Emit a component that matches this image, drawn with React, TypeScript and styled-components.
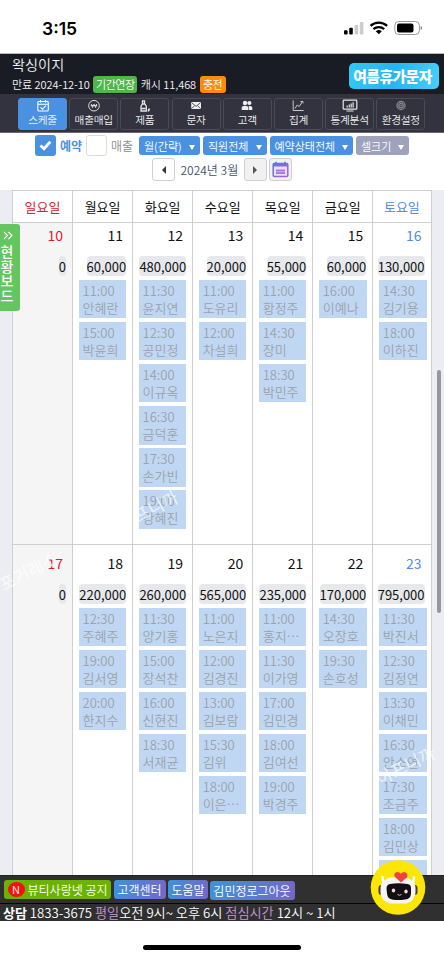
import React from "react";
import styled, { createGlobalStyle, css } from "styled-components";

const Global = createGlobalStyle`
  * { box-sizing: border-box; }
  html, body { margin: 0; padding: 0; background: #fff; }
  body { font-family: "Noto Sans CJK KR", "Noto Sans", sans-serif; font-weight: 350; overflow: hidden; }
`;

const Screen = styled.div`
  position: relative;
  width: 444px;
  height: 960px;
  overflow: hidden;
  display: flex;
  flex-direction: column;
  background: #fff;
  white-space: nowrap;
`;

const StatusBar = styled.div`
  height: 54px;
  flex: none;
  display: flex;
  align-items: center;
  justify-content: space-between;
  padding: 3px 21px 0 42px;
  border-bottom: 1px solid #b9babd;
`;
const Clock = styled.span`
  font: 600 17.5px/20px Inter, sans-serif;
  letter-spacing: 0;
  padding-top: 2px;
`;
const StatusIcons = styled.svg`
  width: 82px;
  height: 18px;
`;

const Header = styled.header`
  height: 40px;
  flex: none;
  background: #191c24;
  color: #f1f2f4;
  display: flex;
  justify-content: space-between;
  padding: 0 5px 0 12px;
`;
const ShopInfo = styled.div`
  display: flex;
  flex-direction: column;
`;
const ShopName = styled.div`
  font-size: 14.2px;
  line-height: 21px;
  height: 21px;
`;
const AccountLine = styled.div`
  display: flex;
  align-items: center;
  font-size: 11px;
  line-height: 18px;
  height: 18px;
  letter-spacing: -0.06px;
`;
const Tag = styled.span<{ $color: string; $w: number; $gap: number }>`
  width: ${(p) => p.$w}px;
  height: 17px;
  margin: 0 ${(p) => p.$gap}px;
  border-radius: 3px;
  background: ${(p) => p.$color};
  color: #fff;
  text-align: center;
  line-height: 17px;
  letter-spacing: -0.5px;
  font-size: 11px;
`;
const Promo = styled.div`
  width: 90px;
  height: 26px;
  margin-top: 9px;
  padding-right: 3px;
  border-radius: 5px;
  background: linear-gradient(100deg, #35c8f6, #27b4f2 50%, #46d0fa);
  color: #fff;
  font-size: 14.8px;
  font-weight: 900;
  letter-spacing: -0.5px;
  line-height: 25px;
  text-align: center;
`;

const Nav = styled.nav`
  height: 39px;
  flex: none;
  background: #32333f;
  border-bottom: 1px solid #6d6672;
  display: flex;
  gap: 2.2px;
  padding: 4px 0 0 18px;
`;
const NavButton = styled.div<{ $active?: boolean }>`
  width: 49px;
  height: 32px;
  border-radius: 3px;
  border: 1px solid ${(p) => (p.$active ? "#4b91e2" : "#484a56")};
  background: ${(p) => (p.$active ? "#4b91e2" : "#32333f")};
  color: #f0f0f2;
  display: flex;
  flex-direction: column;
  align-items: center;
  font-size: 10.7px;
  line-height: 16px;
  letter-spacing: -0.3px;
  svg { width: 16px; height: 13px; margin: 0; flex: none; }
`;

const Filters = styled.div`
  height: 24px;
  flex: none;
  display: flex;
  align-items: center;
  padding: 1px 0 0 35px;
`;
const Check = styled.div<{ $on?: boolean }>`
  width: 21px;
  height: 21px;
  border-radius: 3px;
  background: ${(p) => (p.$on ? "#4b91e2" : "#fff")};
  border: ${(p) => (p.$on ? "none" : "1.5px solid #dfdcd8")};
  display: flex;
  align-items: center;
  justify-content: center;
`;
const CheckLabel = styled.span<{ $on?: boolean }>`
  width: ${(p) => (p.$on ? 26 : 28)}px;
  margin-left: 4px;
  font-size: 12px;
  line-height: 20px;
  font-weight: ${(p) => (p.$on ? 700 : 350)};
  color: ${(p) => (p.$on ? "#4b91e2" : "#8d8d8d")};
`;
const Select = styled.div<{ $w: number; $muted?: boolean }>`
  width: ${(p) => p.$w}px;
  height: 19px;
  margin-right: 3px;
  padding: 0 5px;
  border-radius: 3px;
  background: ${(p) => (p.$muted ? "#9fa2bd" : "#4b91e2")};
  color: #fff;
  display: flex;
  align-items: center;
  justify-content: space-between;
  font-size: 11px;
  line-height: 18px;
  &::after {
    content: "";
    border: 3.5px solid transparent;
    border-top: 5px solid #fff;
    border-bottom: 0;
    margin-top: 3px;
  }
`;
const MonthRow = styled.div`
  height: 33px;
  flex: none;
  display: flex;
  padding: 1px 0 0 152px;
`;
const SquareButton = styled.div<{ $shade?: boolean }>`
  width: 23px;
  height: 23px;
  margin-right: 2.5px;
  border: 1px solid #cfcfcf;
  border-radius: 3px;
  background: ${(p) => (p.$shade ? "#f1f1f1" : "#fff")};
  display: flex;
  align-items: center;
  justify-content: center;
`;
const MonthLabel = styled.span`
  width: 66px;
  padding-left: 3px;
  font-size: 12px;
  line-height: 24px;
  color: #42526a;
`;

const Board = styled.main`
  height: 685px;
  flex: none;
  background: #ecedf3;
  padding: 0 12.5px 0 12px;
  overflow: hidden;
`;
const Week = styled.div<{ $h: number }>`
  height: ${(p) => p.$h}px;
  width: 419.5px;
  display: grid;
  grid-template-columns: repeat(6, 60.05px) 1fr;
  border-top: 1px solid #cfcfcf;
  border-left: 1px solid #cfcfcf;
`;
type Tone = "red" | "blue" | "plain";
const toneColor = { red: "#e0202c", blue: "#4f8de0", plain: "#111" };
const DayName = styled.div<{ $tone: Tone }>`
  background: #fff;
  border-right: 1px solid #cfcfcf;
  color: ${(p) => toneColor[p.$tone]};
  font-size: 13px;
  font-weight: 400;
  line-height: 31px;
  text-align: center;
`;
const DayCell = styled.div<{ $top: number; $sunday: boolean }>`
  background: ${(p) => (p.$sunday ? "#f5f5f6" : "#fff")};
  border-right: 1px solid #cfcfcf;
  padding: ${(p) => p.$top}px 5px 0 6px;
  display: flex;
  flex-direction: column;
  overflow: hidden;
`;
const DayNumber = styled.div<{ $tone: Tone }>`
  height: 20px;
  flex: none;
  margin: 0 4px 10px 0;
  text-align: right;
  font-size: 14px;
  line-height: 18px;
  font-weight: 400;
  color: ${(p) => toneColor[p.$tone]};
`;
const Sales = styled.div`
  align-self: flex-end;
  flex: none;
  height: 20px;
  margin: 0 1px 4px 0;
  border-radius: 4px;
  background: #e6e8ec;
  color: #111;
  font-size: 13px;
  font-weight: 400;
  letter-spacing: -0.02px;
  line-height: 21px;
`;
const Booking = styled.div`
  height: 38.3px;
  width: 47.3px;
  flex: none;
  margin-bottom: 3.8px;
  padding: 2px 0 0 3.5px;
  background: #c0d7f3;
  color: #9ba2aa;
  font-size: 13px;
  line-height: 17px;
`;

const Footer = styled.footer`
  height: 46px;
  flex: none;
  background: #303030;
  color: #fff;
`;
const FooterButtons = styled.div`
  height: 29px;
  display: flex;
  align-items: center;
  gap: 2.5px;
  padding-left: 4px;
  border-bottom: 1px solid #050505;
  border-top: 1px solid #232323;
`;
const Pill = styled.div<{ $w: number; $green?: boolean; $down?: boolean }>`
  width: ${(p) => p.$w}px;
  height: 19px;
  margin-top: ${(p) => (p.$down ? 1 : -1)}px;
  margin-left: ${(p) => (p.$down ? -1 : 0)}px;
  border-radius: 3px;
  display: flex;
  align-items: center;
  justify-content: center;
  gap: 3px;
  font-size: 12px;
  line-height: 19px;
  ${(p) =>
    p.$green
      ? css`background: #6bb300;`
      : css`background: linear-gradient(100deg, #3e92dc, #7468c4);`}
`;
const NewDot = styled.span`
  width: 17px;
  height: 15px;
  border-radius: 50%;
  background: #f50f0f;
  text-align: center;
  font-size: 11px;
  line-height: 15px;
`;
const Hours = styled.div`
  height: 17px;
  padding-left: 3px;
  font-size: 13.2px;
  line-height: 17px;
  letter-spacing: -0.02px;
  b { font-weight: 700; font-size: 13px; }
  em { font-style: normal; color: #c39ade; }
`;
const HomeArea = styled.div`
  flex: 1;
  display: flex;
  justify-content: center;
  padding-top: 24px;
`;
const HomeBar = styled.div`
  width: 158px;
  height: 5px;
  border-radius: 3px;
  background: #000;
`;

const SideTab = styled.div`
  position: absolute;
  left: 0;
  top: 224px;
  width: 20px;
  height: 87px;
  border-radius: 0 3px 3px 0;
  background: #64c561;
  color: #fff;
  display: flex;
  flex-direction: column;
  align-items: center;
  padding: 7px 6px 0 0;
  svg { width: 10px; height: 9px; margin: 0 0 4px 1px; flex: none; }
  span { font-size: 14px; line-height: 14.5px; font-weight: 500; width: 14px; text-align: center; }
`;
const ScrollThumb = styled.div`
  position: absolute;
  left: 436.5px;
  top: 370px;
  width: 4px;
  height: 243px;
  border-radius: 2px;
  background: #96979c;
`;
const Watermark = styled.div<{ $x: number; $y: number }>`
  position: absolute;
  left: ${(p) => p.$x}px;
  top: ${(p) => p.$y}px;
  color: rgba(255, 255, 255, 0.72);
  font-size: 17px;
  line-height: 20px;
  font-weight: 400;
  transform: rotate(-27deg);
`;
const ChatBot = styled.svg`
  position: absolute;
  left: 370px;
  top: 859px;
  width: 56px;
  height: 57px;
`;

const navItems: { label: string; icon: React.ReactNode }[] = [
  {
    label: "스케줄",
    icon: (
      <g fill="none" stroke="#fff" strokeWidth="1.1">
        <rect x="2.8" y="2.5" width="10.5" height="9.5" rx="1" />
        <path d="M3 5.2h10M5.5 1v2.5M10.5 1v2.5M5.5 8.3l2 2 3.3-3.6" />
      </g>
    ),
  },
  {
    label: "매출매입",
    icon: (
      <g fill="none" stroke="#ddd" strokeWidth="1">
        <circle cx="8" cy="6.7" r="5.3" />
        <path d="M5.4 5l1 3.6L8 5.2l1.6 3.4 1-3.6M4.8 6.6h6.4" />
      </g>
    ),
  },
  {
    label: "제품",
    icon: (
      <g fill="none" stroke="#e6e6e6" strokeWidth="1.3">
        <path d="M4 12V7.2L5.5 5h2.3l1.5 2.2V12zM5.5 5V1.8h2V5M4.5 9.5h4" />
        <path d="M12 9.4v1.2a1.3 1.3 0 0 1-1.3 1.3" strokeWidth="1.8" />
      </g>
    ),
  },
  {
    label: "문자",
    icon: (
      <g>
        <rect x="3.2" y="3" width="9.8" height="7" rx="1.2" fill="#eee" />
        <path d="M4 4l4.1 3.3L12.2 4M4 9.3L6.7 6.6M12.2 9.3L9.5 6.6" fill="none" stroke="#32333f" strokeWidth=".8" />
      </g>
    ),
  },
  {
    label: "고객",
    icon: (
      <g fill="#eee">
        <circle cx="6" cy="4" r="2.2" />
        <circle cx="10.4" cy="4" r="2.1" />
        <path d="M2.7 11V8.3Q3 6.8 6 6.8T9 8.3V11zM9.6 11V7.2q3.6-.7 3.7 1.4V11z" />
      </g>
    ),
  },
  {
    label: "집계",
    icon: <path d="M3.2 1.5v10h10.5M5 9.5L7.2 6l2 1.5 3.4-5M10.5 2.7l2.2-.4.4 2" fill="none" stroke="#c9c9cc" strokeWidth="1" />,
  },
  {
    label: "통계분석",
    icon: (
      <g fill="none" stroke="#e8e8e8" strokeWidth="1.2">
        <rect x="1.2" y="1.2" width="13.6" height="9" rx=".8" />
        <path d="M5.2 8.5V6.6M7.3 8.5V5.5M9.2 8.5V4.5M11.1 8.5V3.3M4.5 12h7" />
      </g>
    ),
  },
  {
    label: "환경설정",
    icon: (
      <g fill="none" stroke="#85868d">
        <circle cx="8" cy="6.5" r="4" strokeWidth="1.3" />
        <circle cx="8" cy="6.5" r="2.2" strokeWidth="1.3" />
        <circle cx="8" cy="6.5" r=".6" />
      </g>
    ),
  },
];

const toneOf = (i: number): Tone => (i === 0 ? "red" : i === 6 ? "blue" : "plain");
const dayNames = ["일요일", "월요일", "화요일", "수요일", "목요일", "금요일", "토요일"];

type Day = { day: number; sales: string; list: string[] };
const firstWeek: Day[] = [
  { day: 10, sales: "0", list: [] },
  { day: 11, sales: "60,000", list: ["11:00 안혜란", "15:00 박윤희"] },
  { day: 12, sales: "480,000", list: ["11:30 윤지연", "12:30 공민정", "14:00 이규옥", "16:30 금덕훈", "17:30 손가빈", "19:00 강혜진"] },
  { day: 13, sales: "20,000", list: ["11:00 도유리", "12:00 차설희"] },
  { day: 14, sales: "55,000", list: ["11:00 황정주", "14:30 장미", "18:30 박민주"] },
  { day: 15, sales: "60,000", list: ["16:00 이예나"] },
  { day: 16, sales: "130,000", list: ["14:30 김기용", "18:00 이하진"] },
];
const secondWeek: Day[] = [
  { day: 17, sales: "0", list: [] },
  { day: 18, sales: "220,000", list: ["12:30 주혜주", "19:00 김서영", "20:00 한지수"] },
  { day: 19, sales: "260,000", list: ["11:30 양기홍", "15:00 장석찬", "16:00 신현진", "18:30 서재균"] },
  { day: 20, sales: "565,000", list: ["11:00 노은지", "12:00 김경진", "13:00 김보람", "15:30 김위", "18:00 이은⋯"] },
  { day: 21, sales: "235,000", list: ["11:00 홍지⋯", "11:30 이가영", "17:00 김민경", "18:00 김여선", "19:00 박경주"] },
  { day: 22, sales: "170,000", list: ["14:30 오장호", "19:30 손호성"] },
  { day: 23, sales: "795,000", list: ["11:30 박진서", "12:30 김정연", "13:30 이채민", "16:30 안소연", "17:30 조금주", "18:00 김민상", ""] },
];

function WeekRow({ days, height, top }: { days: Day[]; height: number; top: number }) {
  return (
    <Week $h={height}>
      {days.map((d, i) => (
        <DayCell key={d.day} $top={top} $sunday={i === 0}>
          <DayNumber $tone={toneOf(i)}>{d.day}</DayNumber>
          <Sales>{d.sales}</Sales>
          {d.list.map((entry) => {
            const [time, name] = entry.split(" ");
            return (
              <Booking key={entry}>
                <div>{time}</div>
                <div>{name}</div>
              </Booking>
            );
          })}
        </DayCell>
      ))}
    </Week>
  );
}

export default function App() {
  return (
    <>
      <Global />
      <Screen>
        <StatusBar>
          <Clock>3:15</Clock>
          <StatusIcons viewBox="0 0 82 18">
            <rect x="3" y="11.2" width="3.6" height="4.2" rx="1" />
            <rect x="8.2" y="8.8" width="3.6" height="6.6" rx="1" />
            <rect x="13.6" y="6" width="3.6" height="9.4" rx="1" fill="#ccc" />
            <rect x="18.8" y="3" width="3.6" height="12.4" rx="1" fill="#ccc" />
            <g fill="none" stroke="#000" strokeWidth="2.3">
              <path d="M29.5 6.9a12 12 0 0 1 16.6 0M32.4 10.2a8 8 0 0 1 10.8 0" />
            </g>
            <path d="M34.8 12.3a4.6 4.6 0 0 1 6 0l-3 3z" />
            <rect x="53.8" y="2.5" width="24.6" height="13" rx="4" fill="none" stroke="#999" />
            <rect x="56" y="4.6" width="16.5" height="8.8" rx="2" />
            <path d="M79.6 7v4q1.6-.6 1.6-2t-1.6-2z" fill="#888" />
          </StatusIcons>
        </StatusBar>

        <Header>
          <ShopInfo>
            <ShopName>왁싱이지</ShopName>
            <AccountLine>
              만료 2024-12-10
              <Tag $color="#50b54b" $w={44} $gap={3.5}>기간연장</Tag>
              캐시 11,468
              <Tag $color="#fb8c0b" $w={26} $gap={3.5}>충전</Tag>
            </AccountLine>
          </ShopInfo>
          <Promo>여름휴가문자</Promo>
        </Header>

        <Nav>
          {navItems.map((n, i) => (
            <NavButton key={n.label} $active={i === 0}>
              <svg viewBox="0 0 16 13">{n.icon}</svg>
              {n.label}
            </NavButton>
          ))}
        </Nav>

        <Filters>
          <Check $on>
            <svg width="13" height="11" viewBox="0 0 13 11">
              <path d="M1.5 5.5L5 8.8l6.3-7" fill="none" stroke="#fff" strokeWidth="2.8" />
            </svg>
          </Check>
          <CheckLabel $on>예약</CheckLabel>
          <Check />
          <CheckLabel>매출</CheckLabel>
          <Select $w={61}>월(간략)</Select>
          <Select $w={63.5}>직원전체</Select>
          <Select $w={83.5}>예약상태전체</Select>
          <Select $w={53} $muted>셀크기</Select>
        </Filters>
        <MonthRow>
          <SquareButton>
            <svg width="6" height="8"><path d="M5 0v8L1 4z" fill="#333" /></svg>
          </SquareButton>
          <MonthLabel>2024년 3월</MonthLabel>
          <SquareButton $shade>
            <svg width="6" height="8"><path d="M1 0v8l4-4z" fill="#555" /></svg>
          </SquareButton>
          <SquareButton $shade>
            <svg width="17" height="17" viewBox="0 0 17 17">
              <defs>
                <linearGradient id="calendarTint" x1="0" y1="0" x2="1" y2="1">
                  <stop offset="0" stopColor="#4e7ad6" />
                  <stop offset="1" stopColor="#b25de0" />
                </linearGradient>
              </defs>
              <rect x="1.2" y="2.5" width="14.6" height="13" rx="1" fill="#eadffa" stroke="url(#calendarTint)" strokeWidth="1.5" />
              <path d="M1 2.5h15v3H1z" fill="url(#calendarTint)" />
              <path d="M4 .8v3.5M13 .8v3.5" stroke="#5d7de0" strokeWidth="1.6" />
              <path d="M4 8.5h9V13H4z" fill="#a678dc" />
              <path d="M4 10.7h9" stroke="#eadffa" strokeWidth=".6" />
            </svg>
          </SquareButton>
        </MonthRow>

        <Board>
          <Week $h={32}>
            {dayNames.map((n, i) => (
              <DayName key={n} $tone={toneOf(i)}>{n}</DayName>
            ))}
          </Week>
          <WeekRow days={firstWeek} height={322} top={3} />
          <WeekRow days={secondWeek} height={340} top={8.5} />
        </Board>

        <Footer>
          <FooterButtons>
            <Pill $w={107} $green><NewDot>N</NewDot>뷰티사랑넷 공지</Pill>
            <Pill $w={52}>고객센터</Pill>
            <Pill $w={40}>도움말</Pill>
            <Pill $w={85} $down>김민정로그아웃</Pill>
          </FooterButtons>
          <Hours>
            <b>상담</b> 1833-3675 <em>평일</em>오전 9시~ 오후 6시 <em>점심시간</em> 12시 ~ 1시
          </Hours>
        </Footer>
        <HomeArea><HomeBar /></HomeArea>

        <SideTab>
          <svg viewBox="0 0 10 9"><path d="M1 1l3.5 3.5L1 8M5.5 1L9 4.5 5.5 8" fill="none" stroke="#fff" strokeWidth="1.1" /></svg>
          <span>현</span><span>황</span><span>보</span><span>드</span>
        </SideTab>
        <ScrollThumb />
        <Watermark $x={-3} $y={561}>포거래소</Watermark>
        <Watermark $x={132} $y={496}>프니까</Watermark>
        <Watermark $x={374} $y={755}>아프니까</Watermark>

        <ChatBot viewBox="0 0 56 57">
          <circle cx="28" cy="28.5" r="27.3" fill="#fbe606" />
          <path d="M13.5 26l-1-8M43 26l1-8" stroke="#fff" strokeWidth="2.4" strokeLinecap="round" />
          <rect x="8.5" y="26" width="6" height="10" rx="3" fill="#4b3b3b" />
          <rect x="41.5" y="26" width="6" height="10" rx="3" fill="#4b3b3b" />
          <rect x="10.5" y="18.5" width="35" height="26" rx="11.5" fill="#f7f4f4" />
          <path d="M20 25q8-1.5 17.500 0q3.500.5 3.500 4v5q0 6-6 6.500q-7 1-13 0q-4.500-.7-5-6l-.5-5q0-4 3.500-4.500z" fill="#120f14" />
          <ellipse cx="23.5" cy="31.5" rx="1.7" ry="2.1" fill="#fbd9cf" />
          <ellipse cx="36" cy="32.5" rx="1.7" ry="2.1" fill="#fbd9cf" />
          <path d="M27.5 35.5q2 1.6 4 0" fill="none" stroke="#e8b8b0" />
          <path d="M31 23.5l-5.8-5.2q-2.2-3 .8-5 3-1.3 5 1.4 2.3-2.6 5-1 2.8 2.3.6 5z" fill="#f0433f" />
        </ChatBot>
      </Screen>
    </>
  );
}
